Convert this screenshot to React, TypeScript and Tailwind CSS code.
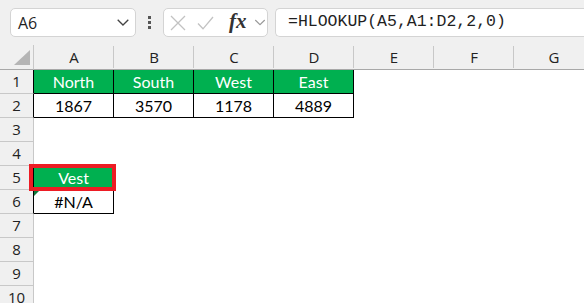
import React from 'react';

const COLS = ['A', 'B', 'C', 'D', 'E', 'F', 'G'];
const ROWS = [1, 2, 3, 4, 5, 6, 7, 8, 9, 10];

// cell contents keyed by address
const CELLS: Record<string, { v: string; head?: boolean }> = {
  A1: { v: 'North', head: true },
  B1: { v: 'South', head: true },
  C1: { v: 'West', head: true },
  D1: { v: 'East', head: true },
  A2: { v: '1867' },
  B2: { v: '3570' },
  C2: { v: '1178' },
  D2: { v: '4889' },
  A5: { v: 'Vest', head: true },
  A6: { v: '#N/A' },
};

const uiFont = { fontFamily: '"Open Sans", "Noto Sans", sans-serif' };
const cellFont = { fontFamily: 'Lato, "Open Sans", sans-serif' };

function Chevron({ className }: { className?: string }) {
  return (
    <svg width="12" height="7" viewBox="0 0 12 7" className={className} fill="none">
      <polyline points="0.7,0.7 6,6 11.3,0.7" stroke="currentColor" strokeWidth="1.3" />
    </svg>
  );
}

function Toolbar() {
  return (
    <div className="h-[45px] flex items-start pt-[8px] bg-[#f0f0f0]">
      {/* name box */}
      <div className="ml-[10px] w-[126px] h-[29px] rounded-[5px] bg-white border border-[#d4d4d4] flex items-center pl-[7px] pr-[6px]">
        <span className="text-[16px] text-[#1f1f1f] flex-1 leading-none" style={uiFont}>A6</span>
        <Chevron className="text-[#444]" />
      </div>
      {/* grip dots */}
      <div className="w-[27px] h-[29px] flex flex-col items-center justify-center gap-[2px]">
        <div className="w-[3px] h-[3px] bg-[#555]" />
        <div className="w-[3px] h-[3px] bg-[#555]" />
        <div className="w-[3px] h-[3px] bg-[#555]" />
      </div>
      {/* cancel / enter / fx */}
      <div className="w-[105px] h-[29px] rounded-[5px] bg-white border border-[#d4d4d4] flex items-center pl-[6px]">
        <svg width="16" height="16" viewBox="0 0 16 16" className="text-[#c2c2c2]" fill="none">
          <path d="M1 1 L15 15 M15 1 L1 15" stroke="currentColor" strokeWidth="1.3" />
        </svg>
        <svg width="17" height="14" viewBox="0 0 17 14" className="ml-[11px] text-[#c2c2c2]" fill="none">
          <path d="M1 7.5 L6 12.8 L16 1" stroke="currentColor" strokeWidth="1.3" />
        </svg>
        <span
          className="ml-[15px] text-[21px] italic font-bold text-[#333] leading-none -mt-[2px]"
          style={{ fontFamily: '"Liberation Serif", "DejaVu Serif", serif' }}
        >
          fx
        </span>
        <Chevron className="ml-[7px] text-[#9a9a9a] scale-90" />
      </div>
      {/* formula bar */}
      <div className="ml-[7px] flex-1 h-[29px] rounded-l-[5px] bg-white border border-r-0 border-[#d4d4d4] flex items-center pl-[12px]">
        <span className="text-[16.5px] text-[#1f1f1f] leading-none" style={{ fontFamily: '"Liberation Mono", "DejaVu Sans Mono", monospace' }}>
          =HLOOKUP(A5,A1:D2,2,0)
        </span>
      </div>
    </div>
  );
}

function Sheet() {
  const boxedRows = [1, 2, 5, 6];
  return (
    <div className="grid grid-cols-[34px_repeat(7,80px)] grid-rows-[25px_repeat(10,24px)] bg-white">
      {/* corner */}
      <div className="bg-[#f0f0f0] border-r border-b border-[#a8a8a8] border-r-[#c8c8c8] relative">
        <svg width="17" height="16" viewBox="0 0 17 16" className="absolute left-[14px] top-[5px]">
          <polygon points="16,0 16,15 0,15" fill="#b5b5b5" />
        </svg>
      </div>
      {COLS.map((c) => (
        <div
          key={c}
          className="bg-[#f0f0f0] border-b border-[#a8a8a8] flex items-center justify-center text-[15px] text-[#222] relative"
          style={uiFont}
        >
          <span className="absolute right-0 top-[1px] bottom-[1px] w-px bg-[#c8c8c8]" />
          {c}
        </div>
      ))}
      {ROWS.map((r) => (
        <React.Fragment key={r}>
          <div
            className={`bg-[#f0f0f0] border-b border-b-[#c8c8c8] border-r flex items-center justify-center text-[15px] text-[#222] ${
              boxedRows.includes(r) ? 'border-r-black' : 'border-r-[#c8c8c8]'
            }`}
            style={uiFont}
          >
            {r}
          </div>
          {COLS.map((c) => {
            const cell = CELLS[`${c}${r}`];
            if (!cell) return <div key={c} />;
            return (
              <div
                key={c}
                className={`border-r border-b border-black flex items-center justify-center text-[16px] relative ${
                  cell.head ? 'bg-[#00b050] text-white' : 'bg-white text-black'
                }`}
                style={cellFont}
              >
                {cell.v === '#N/A' && (
                  <span className="absolute left-0 top-0 w-0 h-0 border-t-[6px] border-r-[6px] border-t-[#0f7b3c] border-r-transparent" />
                )}
                {cell.v}
              </div>
            );
          })}
        </React.Fragment>
      ))}
    </div>
  );
}

export default function App() {
  return (
    <div className="w-[584px] h-[303px] overflow-hidden relative bg-white">
      <div className="h-[2px] bg-[#f7f7f7] border-b border-[#e2e2e2]" />
      <div className="-mt-[2px]">
        <Toolbar />
      </div>
      <Sheet />
      {/* red highlight drawn over A5 */}
      <div className="absolute left-[29px] top-[164px] w-[87px] h-[27px] border-[4px] border-[#ed1c24] pointer-events-none" />
    </div>
  );
}
